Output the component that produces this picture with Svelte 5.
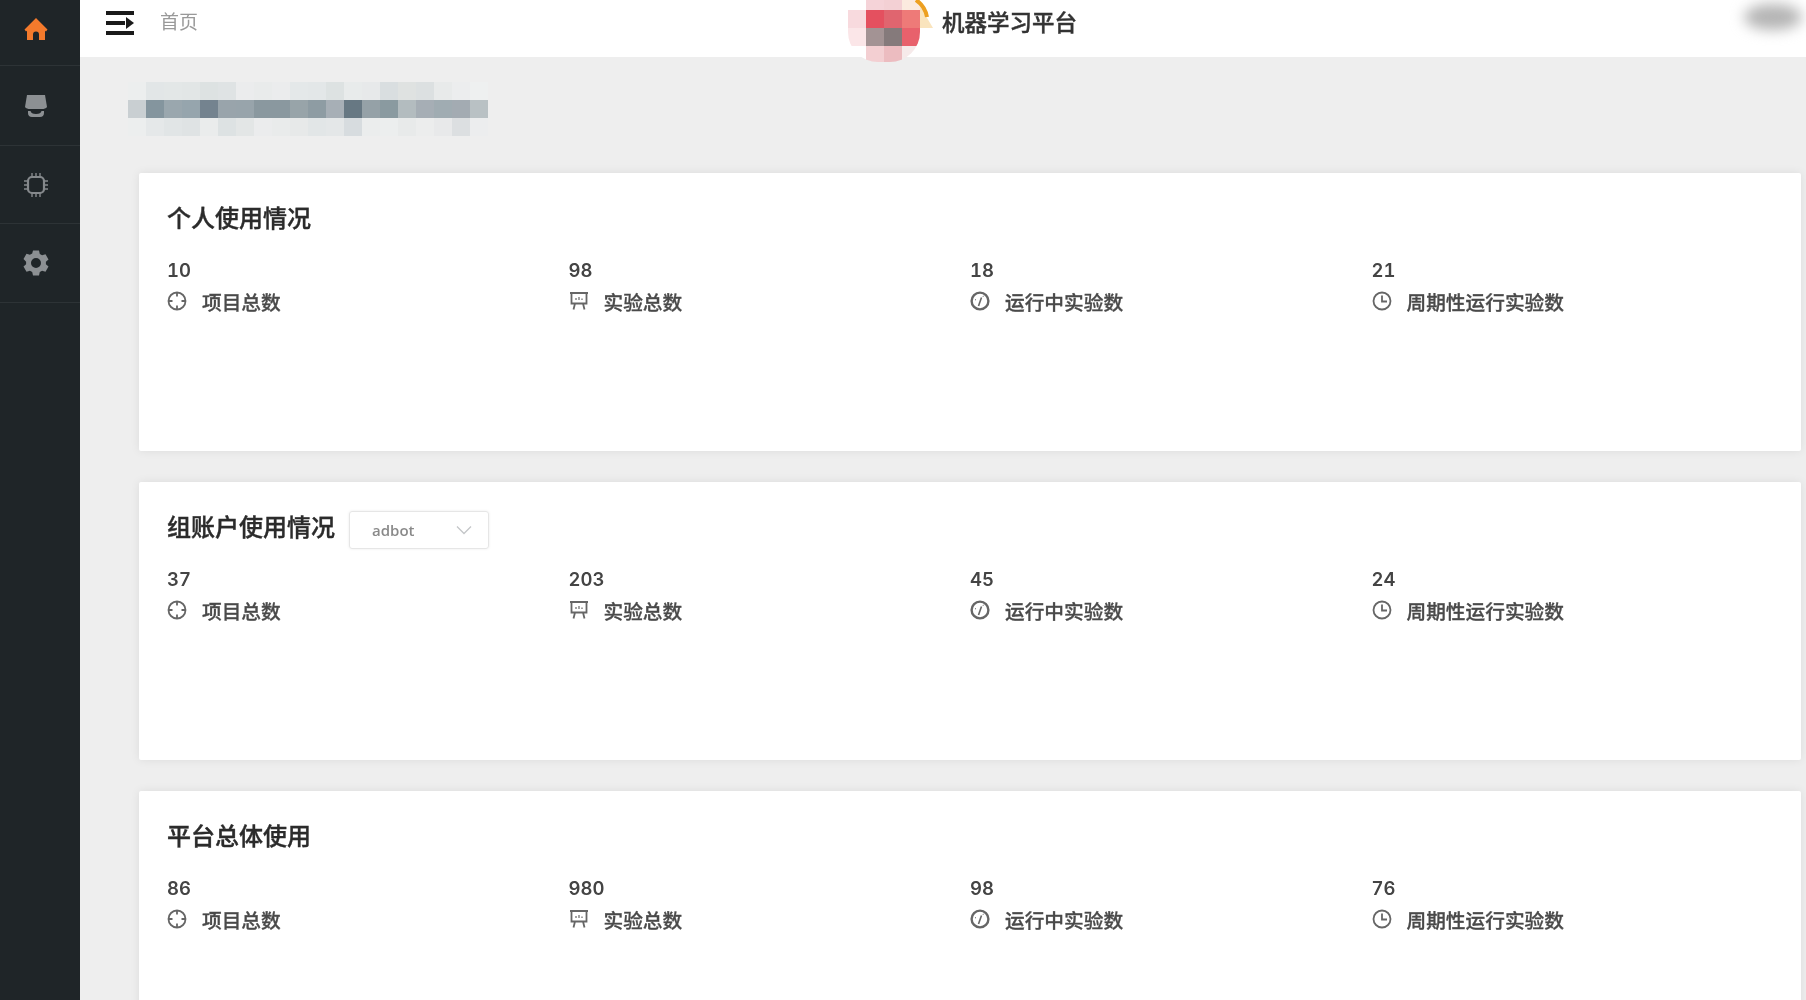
<script>
    const mosaic = [
        '#eceeee #e2e6e7 #e3e7e7 #e2e6e6 #dde2e2 #dfe3e4 #ebeced #e9ebeb #ebeced #e4e8e9 #e3e7e8 #dde2e2 #e8ebeb #e7e9ea #d9dee0 #dfe2e1 #dce0e1 #e8eaea #ecedee #eef0f0',
        '#c9cfd2 #84959e #9aa7ae #96a5ad #74838f #99a4ab #98a4ab #8a989f #8a989f #98a4a9 #8e9ca3 #a7afb6 #677883 #95a1a7 #8a9aa0 #b3bcbf #a6aeb5 #a0acb2 #a3abb2 #b9c1c4',
        '#eceeee #e5e8e9 #e1e5e6 #dfe3e4 #eaecec #dde2e3 #e3e6e6 #ebeced #e9ebeb #e7e9e9 #e2e6e7 #e4e7e8 #d7dcdf #ebeded #eceeee #e8eaea #eceded #e8e9ea #dcdfe1 #ecedee'
    ].flatMap((row) => row.split(' '));

    const logo = [
        '#ffffff #f5d3d8 #f3d0d4 #fbeadf',
        '#f8dade #e4505f #e0656f #ee7a78',
        '#fbe6e8 #a39394 #857a7b #e8616c',
        '#ffffff #f3cfd2 #ecbcc0 #f6eaea'
    ].flatMap((row) => row.split(' '));

    const labels = ['项目总数', '实验总数', '运行中实验数', '周期性运行实验数'];

    const cards = [
        { title: '个人使用情况', values: [10, 98, 18, 21] },
        { title: '组账户使用情况', values: [37, 203, 45, 24], select: 'adbot' },
        { title: '平台总体使用', values: [86, 980, 98, 76] }
    ];
</script>

<div class="app">
    <aside class="sidebar">
        <div class="nav-item first">
            <svg width="26" height="26" viewBox="0 0 26 26">
                <path fill="#f47a2c" d="M13 2 1.500 13.500 3 15.500l1-.8V24h6v-5.500a3 3 0 0 1 6 0V24h6v-9.300l1 .8 1.500-2L13 2z" />
            </svg>
        </div>
        <div class="nav-item">
            <svg width="26" height="26" viewBox="0 0 26 26" fill="#8c9093">
                <path d="M4 2h18l2 12c-1 1.500-3 2-5 2H7c-2 0-4-.5-5-2L4 2z" />
                <path d="M5 18h2.500c.5 2 2 3 5.500 3s5-1 5.500-3H21v2c0 2.500-1.500 4-4 4H9c-2.500 0-4-1.500-4-4v-2z" />
            </svg>
        </div>
        <div class="nav-item">
            <svg width="28" height="28" viewBox="0 0 28 28" fill="none" stroke="#85898c">
                <rect x="6" y="6" width="16" height="16" rx="4" stroke-width="2.200" />
                <path stroke-width="1.400" d="M10 2v4M14 2v4M18 2v4M10 22v4M14 22v4M18 22v4M2 10h4M2 14h4M2 18h4M22 10h4M22 14h4M22 18h4" />
            </svg>
        </div>
        <div class="nav-item">
            <svg width="28" height="28" viewBox="0 0 28 28">
                <path fill="#8c9093" fill-rule="evenodd" d="M11 1.500h6l.8 3.500 2.300 1.300 3.400-1.100 3 5.200-2.600 2.400v2.400l2.600 2.400-3 5.200-3.400-1.100-2.300 1.300-.8 3.500h-6l-.8-3.500-2.300-1.300-3.400 1.100-3-5.200 2.600-2.400v-2.400L1.500 9.900l3-5.200 3.400 1.100L10.200 4.500 11 1.500zM14 9a5 5 0 1 0 0 10 5 5 0 0 0 0-10z" />
            </svg>
        </div>
    </aside>

    <div class="right">
        <header class="topbar">
            <div class="crumbs">
                <svg width="28" height="24" viewBox="0 0 28 24" fill="#1a1a1a">
                    <rect y="0" width="28" height="4" />
                    <rect y="10" width="19" height="4" />
                    <rect y="20" width="28" height="4" />
                    <path d="M20 6 28 12 20 18z" />
                </svg>
                <span class="crumb">首页</span>
            </div>
            <div class="brand">
                <div class="logo">
                    <div class="logo-cells">
                        {#each logo as color}
                            <i style="background:{color}"></i>
                        {/each}
                    </div>
                    <svg class="sun" width="88" height="30" viewBox="0 0 88 30">
                        <path fill="#fae4bd" d="M72 6 72 28 85 28z" />
                        <path fill="none" stroke="#eda021" stroke-width="4" d="M68 0Q77 6 79 17" />
                    </svg>
                </div>
                <span class="brand-name">机器学习平台</span>
            </div>
            <div class="avatar"></div>
        </header>

        <main class="content">
            <div class="page-title">
                {#each mosaic as color}
                    <i style="background:{color}"></i>
                {/each}
            </div>

            {#each cards as card}
                <section class="card">
                    <div class="card-head">
                        <h2>{card.title}</h2>
                        {#if card.select}
                            <div class="select">
                                <span>{card.select}</span>
                                <svg width="16" height="10" viewBox="0 0 16 10" fill="none" stroke="#c4c6c8" stroke-width="1.300">
                                    <path d="M1 1.500 8 8.500l7-7" />
                                </svg>
                            </div>
                        {/if}
                    </div>
                    <div class="stats">
                        {#each labels as label, i}
                            <div class="stat">
                                <div class="value">{card.values[i]}</div>
                                <div class="label">
                                    {#if i === 0}
                                        <svg width="20" height="20" viewBox="0 0 20 20" fill="none" stroke="#666" stroke-width="1.800">
                                            <circle cx="10" cy="10" r="8.500" />
                                            <path d="M10 1.500v4M10 14.500v4M1.500 10h4M14.500 10h4" />
                                        </svg>
                                    {:else if i === 1}
                                        <svg width="20" height="20" viewBox="0 0 20 20" fill="none" stroke="#666" stroke-width="1.800">
                                            <path d="M1 2h18M2.500 2v10.500h15V2M6 12.500l-1.500 6M14 12.500l1.500 6" />
                                            <path stroke-width="1.200" d="M7 9V7M10 9V6M13 9V7.500" />
                                        </svg>
                                    {:else if i === 2}
                                        <svg width="20" height="20" viewBox="0 0 20 20" fill="none" stroke="#666">
                                            <circle cx="10" cy="10" r="8.400" stroke-width="2.400" />
                                            <path stroke-width="1.600" d="M8.500 15 11.500 6.500" />
                                            <path stroke-width="1" d="M5 8.500 6 9M13.500 4.800 13 5.800" />
                                        </svg>
                                    {:else}
                                        <svg width="20" height="20" viewBox="0 0 20 20" fill="none" stroke="#666" stroke-width="1.800">
                                            <circle cx="10" cy="10" r="8.500" />
                                            <path d="M10 4.500V10.500H15" />
                                        </svg>
                                    {/if}
                                    <span>{label}</span>
                                </div>
                            </div>
                        {/each}
                    </div>
                </section>
            {/each}
        </main>
    </div>
</div>

<style>
    :global(body) {
        margin: 0;
        overflow: hidden;
    }

    .app {
        display: flex;
        height: 1000px;
        overflow: hidden;
        background: #eeeeee;
        color: #333;
        font-family: "Noto Sans CJK SC", "Noto Sans", sans-serif;
        filter: blur(0.7px);
    }

    .sidebar {
        flex: 0 0 80px;
        background: #1f2528;
    }

    .nav-item {
        height: 77.700px;
        display: flex;
        align-items: center;
        justify-content: center;
        padding: 1px 9px 0 0;
        margin-bottom: -1px;
        border-bottom: 1px solid #2d3336;
    }

    .nav-item.first {
        height: 65px;
        padding: 0 9px 7px 0;
        box-sizing: border-box;
        height: 66px;
        margin-bottom: 0;
    }

    .right {
        flex: 1;
        min-width: 0;
    }

    .topbar {
        height: 57px;
        background: #fff;
        display: flex;
        align-items: flex-start;
        position: relative;
    }

    .crumbs {
        display: flex;
        align-items: center;
        gap: 26px;
        margin-left: 26px;
        height: 45px;
    }

    .crumb {
        font-size: 19px;
        line-height: 41px;
        height: 45px;
        color: #999;
    }

    .brand {
        display: flex;
        align-items: center;
        margin-left: 650px;
        height: 41px;
    }

    .logo {
        position: relative;
        width: 72px;
        height: 62px;
        margin-top: 21px;
        margin-right: 22px;
        flex: none;
    }

    .logo-cells {
        display: grid;
        grid-template-columns: repeat(4, 18px);
        grid-template-rows: 10px 18px 18px 16px;
        border-radius: 0 0 30px 30px;
        overflow: hidden;
    }

    .logo-cells i {
        display: block;
    }

    .sun {
        position: absolute;
        left: 0;
        top: 0;
    }

    .brand-name {
        font-size: 22.500px;
        font-weight: 500;
        color: #333;
        -webkit-text-stroke: 0.4px #333;
    }

    .avatar {
        position: absolute;
        right: 4px;
        top: 4px;
        width: 58px;
        height: 26px;
        border-radius: 50%;
        background: #b4b4b4;
        filter: blur(7px);
    }

    .content {
        padding: 25px 5px 0 48px;
    }

    .page-title {
        display: grid;
        grid-template-columns: repeat(20, 18px);
        grid-auto-rows: 18px;
        margin-bottom: 37px;
    }

    .page-title i {
        display: block;
    }

    .card {
        margin: 0 0 31px 11px;
        height: 278px;
        box-sizing: border-box;
        padding: 28px 28px 0;
        background: #fff;
        border-radius: 2px;
        box-shadow: 0 0 10px rgba(0, 0, 0, 0.08);
    }

    .card-head {
        display: flex;
        align-items: center;
        gap: 14px;
        height: 38px;
    }

    h2 {
        margin: 0 0 7px;
        font-size: 24px;
        font-weight: 500;
        color: #2b2b2b;
        -webkit-text-stroke: 0.4px #2b2b2b;
    }

    .select {
        width: 140px;
        height: 38px;
        margin-top: 2px;
        box-sizing: border-box;
        display: flex;
        align-items: center;
        justify-content: space-between;
        padding: 0 16px 0 22px;
        border: 1px solid #e6e6e6;
        border-radius: 3px;
        box-shadow: 0 0 3px rgba(0, 0, 0, 0.08);
        font-family: "Open Sans", sans-serif;
        font-size: 15px;
        font-weight: 600;
        color: #8a8a8a;
    }

    .stats {
        display: grid;
        grid-template-columns: repeat(4, 401.500px);
        margin-top: 19px;
    }

    .value {
        height: 24px;
        line-height: 24px;
        font-family: Inter, sans-serif;
        font-size: 18.500px;
        font-weight: 600;
        font-variant-numeric: tabular-nums;
        color: #444;
    }

    .label {
        display: flex;
        align-items: center;
        gap: 15px;
        height: 24px;
        margin-top: 7px;
        font-size: 19.700px;
        font-weight: 500;
        color: #4a4a4a;
        -webkit-text-stroke: 0.3px #4a4a4a;
    }
</style>
